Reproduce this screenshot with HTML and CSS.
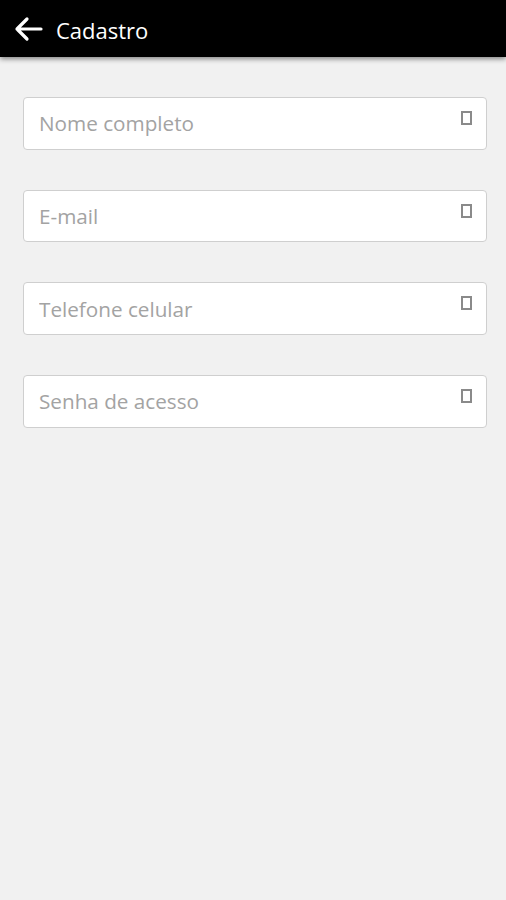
FILE: index.html
```html
<!DOCTYPE html>
<html lang="pt">
<head>
  <meta charset="UTF-8" />
  <meta name="viewport" content="width=device-width, initial-scale=1.0"/>
  <title>Cadastro</title>
  <link rel="stylesheet" href="styles.css">
</head>
<body>
  <header class="topbar">
    <svg class="back" width="30" height="26" viewBox="0 0 30 26">
      <path d="M28 13H4M14 3L4 13l10 10" fill="none" stroke="#fff" stroke-width="3.2" stroke-linecap="round" stroke-linejoin="round"/>
    </svg>
    <h1>Cadastro</h1>
  </header>

  <form class="form">
    <label class="field">
      <input type="text" placeholder="Nome completo" />
      <span class="icon"></span>
    </label>
    <label class="field">
      <input type="text" placeholder="E-mail" />
      <span class="icon"></span>
    </label>
    <label class="field">
      <input type="text" placeholder="Telefone celular" />
      <span class="icon"></span>
    </label>
    <label class="field">
      <input type="password" placeholder="Senha de acesso" />
      <span class="icon"></span>
    </label>
  </form>
</body>
</html>
```

FILE: styles.css
```css
* {
  margin: 0;
  padding: 0;
  box-sizing: border-box;
}

html, body {
  height: 100%;
  font-family: 'Open Sans', sans-serif;
  background: #f1f1f1;
}

.topbar {
  height: 57px;
  background: #000;
  display: flex;
  align-items: center;
  padding-left: 13px;
  box-shadow: 0 2px 5px rgba(0, 0, 0, 0.45);
}

.back {
  display: block;
  margin-top: 1px;
}

.topbar h1 {
  margin-left: 13px;
  color: #fff;
  font-size: 22px;
  font-weight: 400;
  margin-top: 2px;
}

.form {
  display: flex;
  flex-direction: column;
  gap: 40px;
  padding: 40px 19px 0 23px;
}

.field {
  position: relative;
  display: block;
  height: 52.7px;
}

.field input {
  width: 100%;
  height: 100%;
  border: 1px solid #cfcfcf;
  border-radius: 4px;
  background: #fff;
  padding: 0 40px 0 15px;
  font-family: 'Open Sans', sans-serif;
  font-size: 20.7px;
  color: #555;
  outline: none;
}

.field input::placeholder {
  color: #a3a3a3;
}

.icon {
  position: absolute;
  right: 15px;
  top: 14px;
  width: 11px;
  height: 14px;
  border: 2px solid #8a8a8a;
}
```
